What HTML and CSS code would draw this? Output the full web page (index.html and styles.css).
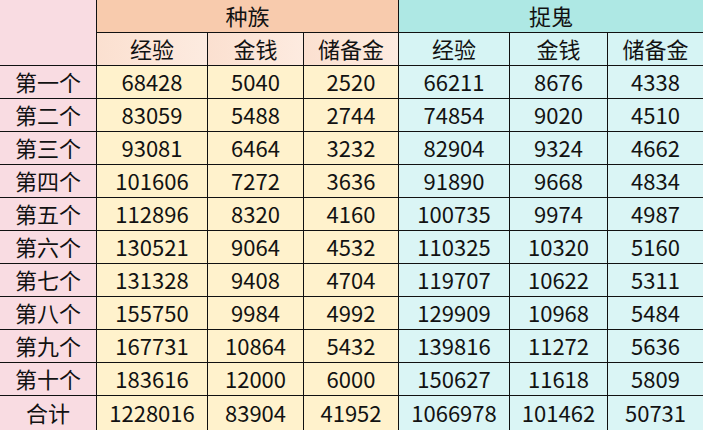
FILE: index.html
```html
<!DOCTYPE html>
<html lang="zh">
<head>
<meta charset="utf-8">
<link rel="stylesheet" href="styles.css">
</head>
<body>
<div class="sheet">
  <div class="corner"></div>
  <div class="grp grp-a">种族</div>
  <div class="grp grp-b">捉鬼</div>
  <div class="sub sub-a">经验</div>
  <div class="sub sub-a">金钱</div>
  <div class="sub sub-a">储备金</div>
  <div class="sub sub-b">经验</div>
  <div class="sub sub-b">金钱</div>
  <div class="sub sub-b">储备金</div>

  <div class="lbl">第一个</div><div class="a">68428</div><div class="a">5040</div><div class="a">2520</div><div class="b">66211</div><div class="b">8676</div><div class="b">4338</div>
  <div class="lbl">第二个</div><div class="a">83059</div><div class="a">5488</div><div class="a">2744</div><div class="b">74854</div><div class="b">9020</div><div class="b">4510</div>
  <div class="lbl">第三个</div><div class="a">93081</div><div class="a">6464</div><div class="a">3232</div><div class="b">82904</div><div class="b">9324</div><div class="b">4662</div>
  <div class="lbl">第四个</div><div class="a">101606</div><div class="a">7272</div><div class="a">3636</div><div class="b">91890</div><div class="b">9668</div><div class="b">4834</div>
  <div class="lbl">第五个</div><div class="a">112896</div><div class="a">8320</div><div class="a">4160</div><div class="b">100735</div><div class="b">9974</div><div class="b">4987</div>
  <div class="lbl">第六个</div><div class="a">130521</div><div class="a">9064</div><div class="a">4532</div><div class="b">110325</div><div class="b">10320</div><div class="b">5160</div>
  <div class="lbl">第七个</div><div class="a">131328</div><div class="a">9408</div><div class="a">4704</div><div class="b">119707</div><div class="b">10622</div><div class="b">5311</div>
  <div class="lbl">第八个</div><div class="a">155750</div><div class="a">9984</div><div class="a">4992</div><div class="b">129909</div><div class="b">10968</div><div class="b">5484</div>
  <div class="lbl">第九个</div><div class="a">167731</div><div class="a">10864</div><div class="a">5432</div><div class="b">139816</div><div class="b">11272</div><div class="b">5636</div>
  <div class="lbl">第十个</div><div class="a">183616</div><div class="a">12000</div><div class="a">6000</div><div class="b">150627</div><div class="b">11618</div><div class="b">5809</div>
  <div class="lbl">合计</div><div class="a">1228016</div><div class="a">83904</div><div class="a">41952</div><div class="b">1066978</div><div class="b">101462</div><div class="b">50731</div>
</div>
</body>
</html>
```

FILE: styles.css
```css
html, body {
  margin: 0;
  padding: 0;
  background: #ffffff;
}

.sheet {
  width: 703px;
  height: 430px;
  display: grid;
  grid-template-columns: 96px 110px 95px 94px 110px 97px 95px;
  grid-template-rows: repeat(12, 32px) 34px;
  gap: 1px;
  background: #111111;
  font-family: "Noto Sans CJK SC", "Noto Sans", sans-serif;
  font-size: 22px;
  color: #121212;
  overflow: hidden;
}

.sheet > div {
  display: flex;
  align-items: center;
  justify-content: center;
  line-height: 1;
  white-space: nowrap;
  padding-bottom: 3px;
  box-sizing: border-box;
}

.corner {
  grid-column: 1;
  grid-row: 1 / span 2;
  background: #f9dce2;
}

.grp-a {
  grid-column: 2 / span 3;
  background: #f8cbad;
}

.grp-b {
  grid-column: 5 / span 3;
  background: #aee8e4;
}

.sub-a {
  background: linear-gradient(90deg, #fbe0d0, #fdebe0);
}

.sub-b {
  background: #d6f4f4;
}

.lbl {
  background: #f9dce2;
}

.a {
  background: #fff2cc;
}

.b {
  background: #daf5f5;
}
```
